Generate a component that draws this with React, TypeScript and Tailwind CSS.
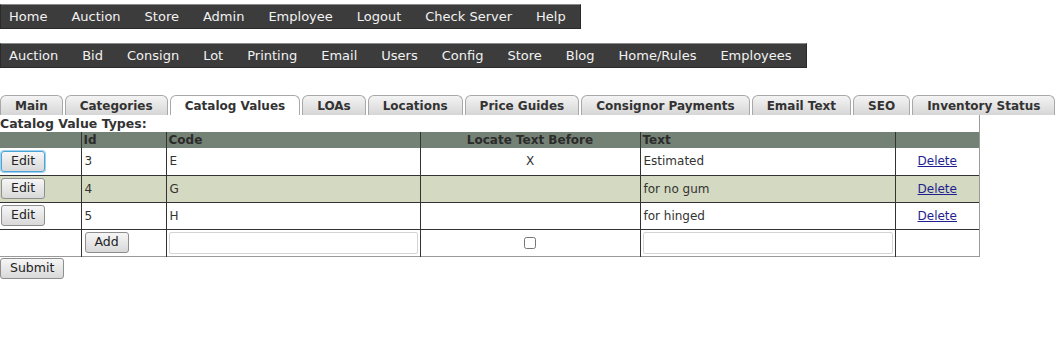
import React from 'react';

const topLinks = ['Home', 'Auction', 'Store', 'Admin', 'Employee', 'Logout', 'Check Server', 'Help'];
const adminLinks = ['Auction', 'Bid', 'Consign', 'Lot', 'Printing', 'Email', 'Users', 'Config', 'Store', 'Blog', 'Home/Rules', 'Employees'];
const tabs = ['Main', 'Categories', 'Catalog Values', 'LOAs', 'Locations', 'Price Guides', 'Consignor Payments', 'Email Text', 'SEO', 'Inventory Status'];

const rows = [
    { id: 3, code: 'E', before: true, text: 'Estimated' },
    { id: 4, code: 'G', before: false, text: 'for no gum' },
    { id: 5, code: 'H', before: false, text: 'for hinged' },
];

function NavBar({ links }: { links: string[] }) {
    return (
        <div className="inline-flex bg-[#3c3c3c] border border-[#2a2a2a] border-t-[#8a8a8a] h-[25px] items-center pl-[8px] pr-[14px] gap-[24px]">
            {links.map((l, i) => (
                <span key={i} className="text-[#f2f2f2] text-[13px] leading-none">{l}</span>
            ))}
        </div>
    );
}

function Btn({ label, focus }: { label: string; focus?: boolean }) {
    return (
        <button
            className={
                'h-[21px] px-[9px] rounded-[3px] border text-[12.5px] leading-none text-[#222] bg-gradient-to-b from-[#f6f6f6] to-[#d9d9d9] ' +
                (focus ? 'border-[#4ba3d6] shadow-[0_0_0_1px_#9fd2ee]' : 'border-[#8e8e8e]')
            }
        >
            {label}
        </button>
    );
}

export default function App() {
    return (
        <div className="w-[1061px] h-[362px] bg-white font-['DejaVu_Sans',sans-serif] text-[#333] overflow-hidden">
            <div className="pt-[4px] flex">
                <NavBar links={topLinks} />
            </div>
            <div className="mt-[14px] flex">
                <NavBar links={adminLinks} />
            </div>

            <div className="mt-[27px] flex gap-[2px] h-[20px] items-end">
                {tabs.map((t) => {
                    const active = t === 'Catalog Values';
                    return (
                        <div
                            key={t}
                            className={
                                'h-[20px] px-[14px] flex items-center rounded-t-[6px] border border-b-0 border-[#a8a8a8] text-[12px] font-bold text-[#333] whitespace-nowrap ' +
                                (active ? 'bg-white' : 'bg-gradient-to-b from-[#f4f4f4] to-[#d6d6d6]')
                            }
                        >
                            {t}
                        </div>
                    );
                })}
            </div>

            <div className="w-[980px] border-r border-[#9a9a9a]">
                <div className="text-[12.5px] font-bold leading-[17px]">Catalog Value Types:</div>
                <table className="w-[979px] border-collapse text-[12px]">
                    <thead>
                        <tr className="bg-[#748175] h-[16px] text-[#2b2b2b] font-bold leading-none">
                            <th className="w-[81px] border-r border-[#333]"></th>
                            <th className="w-[85px] text-left pl-[2px] border-r border-[#333]">Id</th>
                            <th className="w-[254px] text-left pl-[2px] border-r border-[#333]">Code</th>
                            <th className="w-[220px] text-center border-r border-[#333]">Locate Text Before</th>
                            <th className="w-[255px] text-left pl-[2px] border-r border-[#333]">Text</th>
                            <th></th>
                        </tr>
                    </thead>
                    <tbody>
                        {rows.map((r, i) => (
                            <tr key={r.id} className={'h-[27px] border-b border-[#333] ' + (i === 1 ? 'bg-[#d4d9c1]' : 'bg-white')}>
                                <td className="border-r border-[#333] pl-[1px]"><Btn label="Edit" focus={i === 0} /></td>
                                <td className="border-r border-[#333] pl-[3px]">{r.id}</td>
                                <td className="border-r border-[#333] pl-[3px]">{r.code}</td>
                                <td className="border-r border-[#333] text-center">{r.before ? 'X' : ''}</td>
                                <td className="border-r border-[#333] pl-[3px]">{r.text}</td>
                                <td className="text-center">
                                    <a className="underline text-[#1f1f8f]">Delete</a>
                                </td>
                            </tr>
                        ))}
                        <tr className="h-[27px] border-b border-[#9a9a9a]">
                            <td className="border-r border-[#333]"></td>
                            <td className="border-r border-[#333] pl-[3px]"><Btn label="Add" /></td>
                            <td className="border-r border-[#333] px-[2px]">
                                <input className="w-full h-[22px] border border-[#d4d4d4] rounded-[2px] bg-white" />
                            </td>
                            <td className="border-r border-[#333] text-center">
                                <input type="checkbox" className="w-[12px] h-[12px] align-middle" />
                            </td>
                            <td className="border-r border-[#333] px-[2px]">
                                <input className="w-full h-[22px] border border-[#d4d4d4] rounded-[2px] bg-white" />
                            </td>
                            <td></td>
                        </tr>
                    </tbody>
                </table>
            </div>
            <div className="mt-[1px] flex">
                <Btn label="Submit" />
            </div>
        </div>
    );
}
